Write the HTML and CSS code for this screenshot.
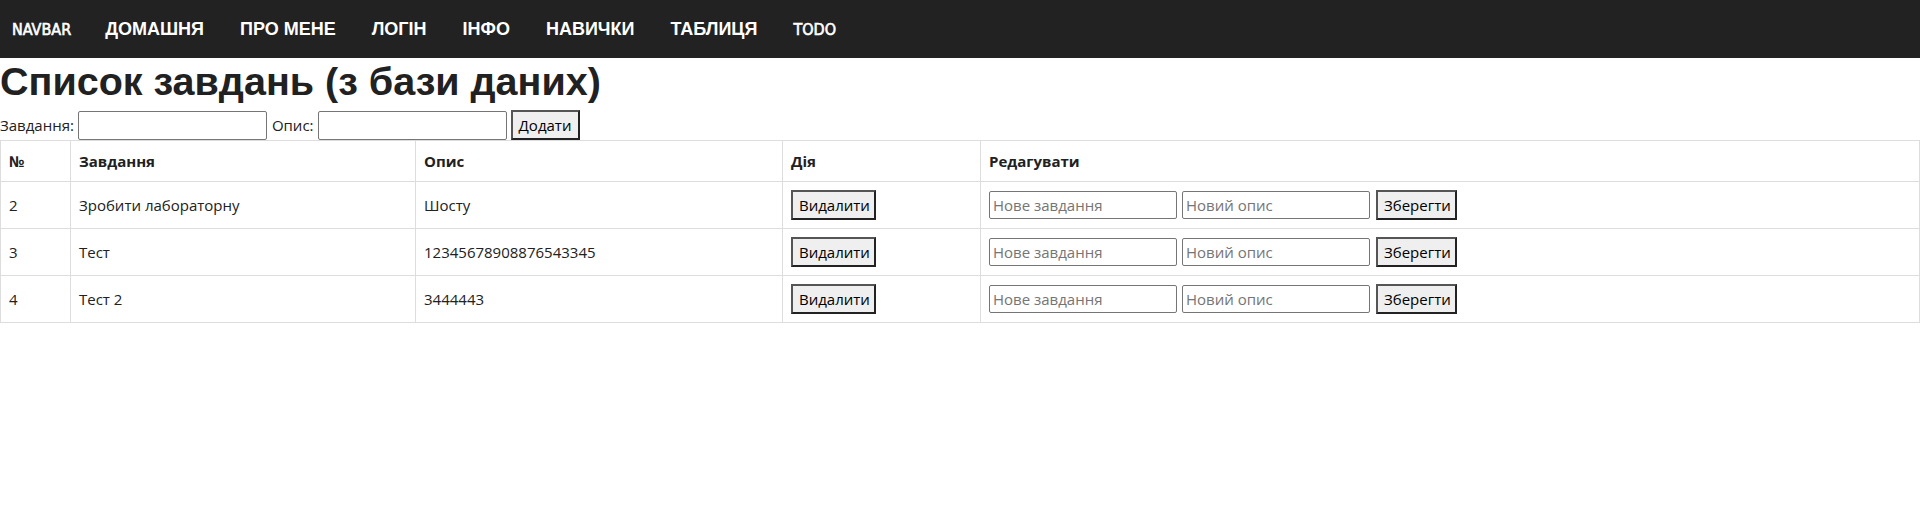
FILE: index.html
```html
<!DOCTYPE html>
<html lang="uk">
<head>
<meta charset="utf-8">
<title>Todo</title>
<link rel="stylesheet" href="styles.css">
</head>
<body>
<nav class="navbar">
  <a class="brand" href="#">NAVBAR</a>
  <ul class="menu">
    <li><a href="#">ДОМАШНЯ</a></li>
    <li><a href="#">ПРО МЕНЕ</a></li>
    <li><a href="#">ЛОГІН</a></li>
    <li><a href="#">ІНФО</a></li>
    <li><a href="#">НАВИЧКИ</a></li>
    <li><a href="#">ТАБЛИЦЯ</a></li>
    <li><a class="latin" href="#">TODO</a></li>
  </ul>
</nav>
<h1 class="title">Список завдань (з бази даних)</h1>
<form class="add-form">
  <label class="lbl">Завдання:</label>
  <input class="field" type="text">
  <label class="lbl lbl-opis">Опис:</label>
  <input class="field" type="text">
  <button class="btn btn-add" type="button">Додати</button>
</form>
<table class="tasks">
  <thead>
    <tr>
      <th class="c-num">№</th>
      <th class="c-task">Завдання</th>
      <th class="c-desc">Опис</th>
      <th class="c-act">Дія</th>
      <th class="c-edit">Редагувати</th>
    </tr>
  </thead>
  <tbody>
    <tr>
      <td>2</td>
      <td>Зробити лабораторну</td>
      <td>Шосту</td>
      <td><button class="btn btn-del" type="button">Видалити</button></td>
      <td><div class="edit"><input class="field" type="text" placeholder="Нове завдання"><input class="field" type="text" placeholder="Новий опис"><button class="btn btn-save" type="button">Зберегти</button></div></td>
    </tr>
    <tr>
      <td>3</td>
      <td>Тест</td>
      <td>12345678908876543345</td>
      <td><button class="btn btn-del" type="button">Видалити</button></td>
      <td><div class="edit"><input class="field" type="text" placeholder="Нове завдання"><input class="field" type="text" placeholder="Новий опис"><button class="btn btn-save" type="button">Зберегти</button></div></td>
    </tr>
    <tr>
      <td>4</td>
      <td>Тест 2</td>
      <td>3444443</td>
      <td><button class="btn btn-del" type="button">Видалити</button></td>
      <td><div class="edit"><input class="field" type="text" placeholder="Нове завдання"><input class="field" type="text" placeholder="Новий опис"><button class="btn btn-save" type="button">Зберегти</button></div></td>
    </tr>
  </tbody>
</table>
</body>
</html>
```

FILE: styles.css
```css
html, body {
  margin: 0;
  padding: 0;
  background: #fff;
  color: #212121;
  font-family: "Open Sans", "Noto Sans", sans-serif;
  font-size: 15px;
}

.navbar {
  display: flex;
  align-items: center;
  height: 58px;
  background: #222222;
  padding: 0 0 0 12px;
  box-sizing: border-box;
}

.navbar a {
  color: #ffffff;
  text-decoration: none;
}

.brand {
  font-family: "DejaVu Sans Condensed", "DejaVu Sans", sans-serif;
  font-stretch: condensed;
  font-size: 16px;
  font-weight: normal;
  -webkit-text-stroke: 0.6px #ffffff;
  margin-right: 34px;
}

.menu {
  display: flex;
  gap: 36px;
  list-style: none;
  margin: 0;
  padding: 0;
}

.menu a {
  font-family: "Liberation Sans", Arial, sans-serif;
  font-weight: bold;
  font-size: 18px;
}

.menu a.latin {
  font-family: "DejaVu Sans Condensed", "DejaVu Sans", sans-serif;
  font-stretch: condensed;
  font-weight: normal;
  font-size: 16px;
  -webkit-text-stroke: 0.6px #ffffff;
}

.title {
  margin: 0;
  height: 52px;
  line-height: 46px;
  font-family: "Liberation Sans", Arial, sans-serif;
  font-size: 39.5px;
  font-weight: bold;
  color: #212121;
}

.add-form {
  display: flex;
  align-items: center;
  height: 30px;
  margin: 0;
}

.lbl {
  margin-right: 4px;
}

.lbl-opis {
  margin-left: 5px;
}

.field {
  box-sizing: border-box;
  width: 189px;
  height: 29px;
  border: 1px solid #767676;
  border-radius: 2px;
  padding: 1px 3px;
  font-family: inherit;
  font-size: 15px;
  color: #212121;
  background: #fff;
}

.field::placeholder {
  color: #757575;
}

.btn {
  box-sizing: border-box;
  height: 30px;
  padding: 0 6px;
  border: 2px solid #222;
  border-top-color: #555;
  border-left-color: #555;
  background: #efefef;
  color: #000;
  font-family: inherit;
  font-size: 15px;
}

.btn-add {
  width: 69px;
  margin-left: 4px;
}

.tasks {
  width: 100%;
  border-collapse: collapse;
  table-layout: fixed;
}

.tasks th,
.tasks td {
  box-sizing: border-box;
  border: 1px solid #dddddd;
  padding: 0 8px;
  text-align: left;
}

.tasks th {
  height: 41px;
  font-weight: bold;
}

.tasks td {
  height: 47px;
}

.c-num { width: 70px; }
.c-task { width: 345px; }
.c-desc { width: 367px; }
.c-act { width: 198px; }

.btn-del {
  width: 85px;
}

.edit {
  display: flex;
  align-items: center;
  gap: 5px;
}

.edit .field {
  height: 28px;
  width: 188px;
}

.btn-save {
  width: 81px;
  margin-left: 1px;
}
```
